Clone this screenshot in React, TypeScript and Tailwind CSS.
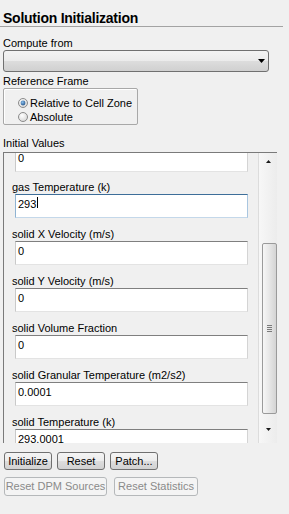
import React from "react";

function Radio({ checked }: { checked?: boolean }) {
  return (
    <svg width="10" height="10" viewBox="0 0 10 10" className="shrink-0">
      <defs>
        <radialGradient id={checked ? "rgA" : "rgB"} cx="40%" cy="35%" r="75%">
          <stop offset="0" stopColor="#ffffff" />
          <stop offset="1" stopColor="#d2d2d2" />
        </radialGradient>
        <radialGradient id="dotG" cx="40%" cy="35%" r="75%">
          <stop offset="0" stopColor="#8cc0ee" />
          <stop offset="1" stopColor="#1b4c82" />
        </radialGradient>
      </defs>
      <circle cx="5" cy="5" r="4.5" fill={`url(#${checked ? "rgA" : "rgB"})`} stroke="#8b8b8b" strokeWidth="1" />
      {checked && <circle cx="5" cy="5" r="2.4" fill="url(#dotG)" />}
    </svg>
  );
}

function Field({ label, value, focused, gap = "mt-[10px]" }: { label?: string; value: string; focused?: boolean; gap?: string }) {
  return (
    <div className={label ? gap : ""}>
      {label && <div className="h-[13px] leading-[13px] whitespace-nowrap">{label}</div>}
      <div
        className={
          "ml-[3px] w-[233px] h-[24px] bg-white border pl-[2px] pt-[3px] leading-[13px] flex items-start " +
          (focused
            ? "border-t-[#3d6e99] border-l-[#8fb3d2] border-r-[#a9c6e0] border-b-[#c4d8ea]"
            : "border-t-[#7f7f7f] border-l-[#c9c9c9] border-r-[#d4d4d4] border-b-[#e3e3e3]")
        }
      >
        <span>{value}</span>
        {focused && <span className="ml-[1px] mt-[-1px] w-px h-[11px] bg-black" />}
      </div>
    </div>
  );
}

function Btn({ children, w, disabled }: { children: React.ReactNode; w: string; disabled?: boolean }) {
  return (
    <div
      className={
        "flex items-center justify-center rounded-[3px] border whitespace-nowrap " +
        w +
        (disabled
          ? " h-[19px] border-[#b5b8ba] bg-[#f4f4f4] text-[#8a8a8a]"
          : " h-[18px] border-[#707070] bg-[linear-gradient(to_bottom,#f4f4f4_0%,#ececec_50%,#dedede_50%,#d2d2d2_100%)] text-black")
      }
    >
      {children}
    </div>
  );
}

export default function App() {
  return (
    <div className="w-[289px] h-[514px] bg-[#f0f0f0] overflow-hidden font-['Liberation_Sans',Arial,sans-serif] text-[11px] leading-[13px] text-black">
      <div className="pt-[10px] pl-[3px] h-[26px] text-[14px] leading-[16px] font-bold tracking-[-0.25px] whitespace-nowrap">
        Solution Initialization
      </div>
      <div className="w-[283px] h-px bg-[#a3a3a3]" />
      <div className="mt-[10px] pl-[3px] h-[13px]">Compute from</div>
      <div className="ml-[3px] w-[266px] h-[22px] rounded-[3px] border border-[#707070] bg-[linear-gradient(to_bottom,#f3f3f3_0%,#ebebeb_50%,#dddddd_50%,#d0d0d0_100%)] flex items-center justify-end pr-[3px]">
        <svg width="7" height="4" viewBox="0 0 7 4">
          <path d="M0 0H7L3.5 4Z" fill="#000" />
        </svg>
      </div>
      <div className="mt-[3px] pl-[3px] h-[13px]">Reference Frame</div>
      <div className="ml-[3px] w-[135px] h-[37px] border border-[#a8a8a8] rounded-[2px] shadow-[inset_1px_1px_0_#ffffff] pt-[7px] pl-[14px]">
        <div className="h-[14px] flex items-center">
          <Radio checked />
          <span className="ml-[2px]">Relative to Cell Zone</span>
        </div>
        <div className="h-[14px] flex items-center">
          <Radio />
          <span className="ml-[2px]">Absolute</span>
        </div>
      </div>
      <div className="mt-[12px] pl-[3px] h-[13px]">Initial Values</div>
      <div className="mt-[2px] ml-[3px] w-[274px] h-[291px] border-t border-l border-[#7a7a7a] flex">
        <div className="w-[254px] h-full overflow-hidden pl-[8px]">
          <div className="-mt-[5px]">
            <Field value="0" />
            <Field label="gas Temperature (k)" value="293" focused gap="mt-[9px]" />
            <Field label="solid X Velocity (m/s)" value="0" />
            <Field label="solid Y Velocity (m/s)" value="0" />
            <Field label="solid Volume Fraction" value="0" />
            <Field label="solid Granular Temperature (m2/s2)" value="0.0001" />
            <Field label="solid Temperature (k)" value="293.0001" />
          </div>
        </div>
        <div className="w-[19px] h-full border-l border-[#dcdcdc] bg-[linear-gradient(to_right,#f7f7f7,#ececec)] flex flex-col items-center">
          <div className="h-[17px] w-full flex items-center justify-center">
            <svg width="5" height="3" viewBox="0 0 5 3">
              <path d="M0 3H5L2.5 0Z" fill="#1a1a1a" />
            </svg>
          </div>
          <div className="mt-[73px] ml-[2px] w-[15px] h-[171px] rounded-[2px] border border-[#9a9a9a] bg-[linear-gradient(to_right,#f6f6f6,#e6e6e6_50%,#d4d4d4)] flex flex-col items-center justify-center gap-[1px]">
            <div className="w-[5px] h-px bg-[#7a7a7a]" />
            <div className="w-[5px] h-px bg-[#7a7a7a]" />
            <div className="w-[5px] h-px bg-[#7a7a7a]" />
            <div className="w-[5px] h-px bg-[#7a7a7a]" />
          </div>
          <div className="flex-1 w-full flex items-center justify-center pt-[2px]">
            <svg width="5" height="3" viewBox="0 0 5 3">
              <path d="M0 0H5L2.5 3Z" fill="#1a1a1a" />
            </svg>
          </div>
        </div>
      </div>
      <div className="mt-[9px] pl-[4px] flex gap-[5px]">
        <Btn w="w-[48px]">Initialize</Btn>
        <Btn w="w-[48px]">Reset</Btn>
        <Btn w="w-[48px]">Patch...</Btn>
      </div>
      <div className="mt-[7px] pl-[4px] flex gap-[7px]">
        <Btn w="w-[103px]" disabled>
          Reset DPM Sources
        </Btn>
        <Btn w="w-[84px]" disabled>
          Reset Statistics
        </Btn>
      </div>
    </div>
  );
}
